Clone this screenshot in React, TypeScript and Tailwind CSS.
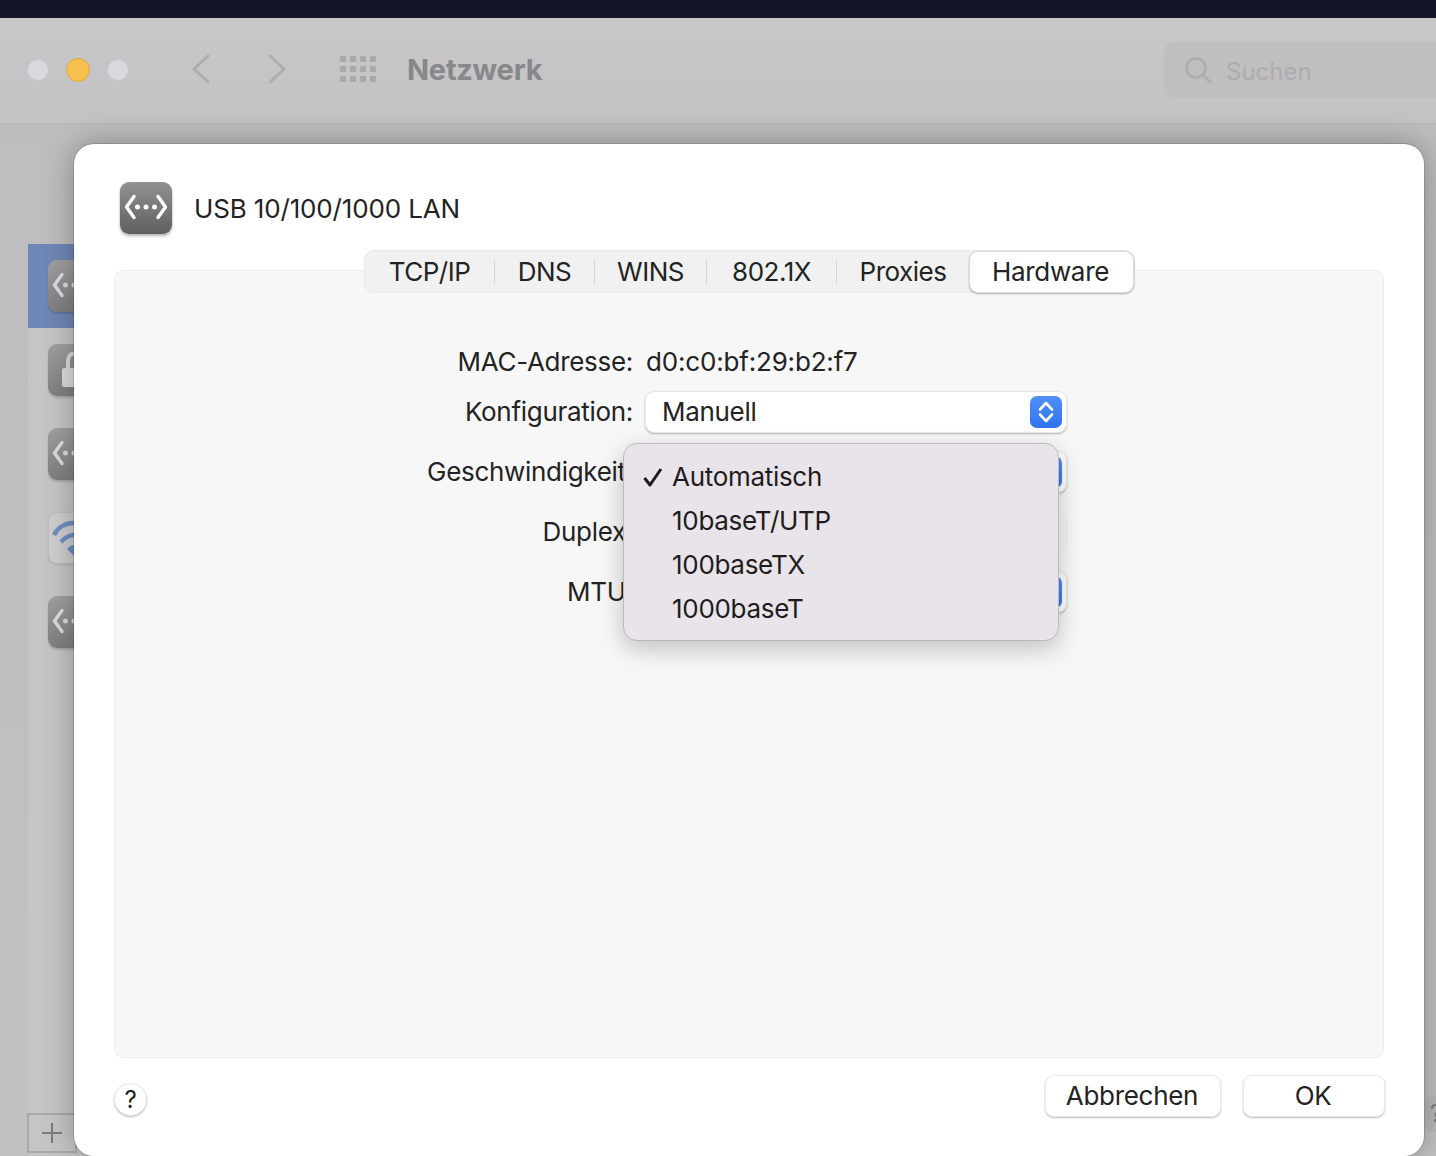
import React from "react";

function NetIcon({ dim = false }: { dim?: boolean }) {
  const c = dim ? "#dcdcdc" : "#fff";
  return (
    <div className={`w-[52px] h-[52px] rounded-[9px] flex items-center justify-center shrink-0 ${dim ? "bg-gradient-to-b from-[#a09fa1] to-[#7f7e80] shadow-[0_2px_2px_rgba(0,0,0,0.15)]" : "bg-gradient-to-b from-[#929292] to-[#5f5f5f] shadow-[0_2px_3px_rgba(0,0,0,0.3)]"}`}>
      <svg width="46" height="30" viewBox="0 0 46 30" fill="none">
        <path d="M11 3.5 L3.5 14 L11 24.5" stroke={c} strokeWidth="3.4" strokeLinecap="round" strokeLinejoin="round" />
        <path d="M35 3.5 L42.5 14 L35 24.5" stroke={c} strokeWidth="3.4" strokeLinecap="round" strokeLinejoin="round" />
        <circle cx="14.5" cy="14" r="2.5" fill={c} />
        <circle cx="23" cy="14" r="2.5" fill={c} />
        <circle cx="31.5" cy="14" r="2.5" fill={c} />
      </svg>
    </div>
  );
}

function LockIcon() {
  return (
    <div className="w-[52px] h-[52px] rounded-[9px] flex items-center justify-center shrink-0 bg-gradient-to-b from-[#a09fa1] to-[#7f7e80] shadow-[0_2px_2px_rgba(0,0,0,0.15)]">
      <svg width="32" height="38" viewBox="0 0 32 38" fill="none">
        <path d="M10 17 V10 C10 0 22 0 22 10 V17" stroke="#dcdcdc" strokeWidth="4" />
        <rect x="4" y="17" width="24" height="19" rx="2" fill="#dcdcdc" />
      </svg>
    </div>
  );
}

function WifiIcon() {
  return (
    <div className="w-[52px] h-[52px] rounded-[9px] flex items-center justify-center shrink-0 bg-[#cfcecf] border border-[#bdbcbe] shadow-[0_1px_2px_rgba(0,0,0,0.1)]">
      <svg width="44" height="36" viewBox="0 0 44 36" fill="none">
        <path d="M2 15 C10 -1 34 -1 42 15" stroke="#6f8fc2" strokeWidth="4.5" />
        <path d="M9 22 Q22 8 35 22" stroke="#6f8fc2" strokeWidth="4.5" />
        <path d="M15 29 Q22 21 29 29 L22 36 Z" fill="#6f8fc2" />
      </svg>
    </div>
  );
}

function SidebarRow({ children, selected = false }: { children: React.ReactNode; selected?: boolean }) {
  return <div className={`h-[84px] pl-5 flex items-center ${selected ? "bg-[#6f87b6]" : ""}`}>{children}</div>;
}

function Stepper() {
  return (
    <div className="w-8 h-8 rounded-[7px] bg-gradient-to-b from-[#4f90f7] to-[#2f73ee] flex items-center justify-center">
      <svg width="16" height="24" viewBox="0 0 16 24" fill="none">
        <path d="M2 9.5 L8 3 L14 9.5" stroke="#fff" strokeWidth="2.6" strokeLinecap="round" strokeLinejoin="round" />
        <path d="M2 14.5 L8 21 L14 14.5" stroke="#fff" strokeWidth="2.6" strokeLinecap="round" strokeLinejoin="round" />
      </svg>
    </div>
  );
}

function FormRow({ label, value, disabled = false }: { label: string; value?: string; disabled?: boolean }) {
  return (
    <div className="flex items-center h-[42px] mb-[18px]">
      <div className="w-[225px] pr-[12px] pb-[2px] text-right whitespace-nowrap">{label}</div>
      <div className={`w-[422px] h-[42px] rounded-[9px] flex items-center justify-between pl-4 pr-[4px] pb-[2px] ${disabled ? "border border-[#ebebeb] bg-[#f5f5f5]" : "bg-white border border-[#e7e7e7] shadow-[0_1px_2px_rgba(0,0,0,0.28)]"}`}>
        <span>{value}</span>
        {!disabled && <span className="pt-[2px]"><Stepper /></span>}
      </div>
    </div>
  );
}

function Tab({ label, width }: { label: string; width: string }) {
  return (
    <div className="flex items-center h-full">
      <span className={`${width} text-center pb-[1px] tracking-[-0.5px]`}>{label}</span>
      <span className="w-px h-[24px] bg-[#d6d6d6]" />
    </div>
  );
}

function MenuItem({ label, checked = false }: { label: string; checked?: boolean }) {
  return (
    <div className="h-[44px] flex items-center pl-[18px]">
      <span className="w-[30px] flex items-center">
        {checked && (
          <svg width="22" height="20" viewBox="0 0 22 20" fill="none">
            <path d="M2.5 11 L8 18 L19 2" stroke="#1f1c20" strokeWidth="3" strokeLinejoin="round" />
          </svg>
        )}
      </span>
      <span className="pb-[1px]">{label}</span>
    </div>
  );
}

function FooterButton({ label, width }: { label: string; width: string }) {
  return (
    <div className={`${width} h-[42px] pb-[2px] pr-[2px] rounded-[9px] bg-white border border-[#ebebeb] shadow-[0_1px_2px_rgba(0,0,0,0.28)] flex items-center justify-center text-[#232323]`}>
      {label}
    </div>
  );
}

export default function App() {
  return (
    <div className="relative w-[1436px] h-[1156px] overflow-hidden bg-[#121628] pt-[18px] font-['Inter','Liberation_Sans',sans-serif]">
      <div className="h-[1138px] rounded-tl-[10px] bg-[#bdbcbe] flex flex-col">
        <div className="h-[106px] shrink-0 flex items-center bg-gradient-to-b from-[#c8c6c9] to-[#c3c2c4] border-b border-[#b5b4b6] pl-[27px] pb-[1px]">
          <div className="flex items-center gap-[18px]">
            <span className="w-[22px] h-[22px] rounded-full bg-[#dcd9de] border border-[#c9c6ca]" />
            <span className="w-[24px] h-[24px] rounded-full bg-[#f6c04f] border border-[#e0a83a] -mx-[1px]" />
            <span className="w-[22px] h-[22px] rounded-full bg-[#dcd9de] border border-[#c9c6ca]" />
          </div>
          <svg className="ml-[62px] -mt-[2px]" width="20" height="30" viewBox="0 0 20 30" fill="none">
            <path d="M17 2 L3 15 L17 28" stroke="#aeadaf" strokeWidth="3" strokeLinecap="round" strokeLinejoin="round" />
          </svg>
          <svg className="ml-[56px] -mt-[2px]" width="20" height="30" viewBox="0 0 20 30" fill="none">
            <path d="M3 2 L17 15 L3 28" stroke="#aeadaf" strokeWidth="3" strokeLinecap="round" strokeLinejoin="round" />
          </svg>
          <div className="ml-[53px] -mt-[2px] grid grid-cols-4 gap-x-[4px] gap-y-[4px]">
            {Array.from({ length: 12 }).map((_, i) => (
              <span key={i} className="w-[6px] h-[6px] bg-[#a9a8aa] rounded-[1px]" />
            ))}
          </div>
          <div className="ml-[31px] text-[29px] tracking-[-0.25px] font-bold text-[#888789]">Netzwerk</div>
          <div className="ml-auto w-[272px] h-[56px] rounded-l-[10px] bg-[#c0bec1] flex items-center pl-[21px] gap-[14px] text-[24px] text-[#aeacaf]">
            <svg width="27" height="27" viewBox="0 0 27 27" fill="none">
              <circle cx="11" cy="11" r="9.5" stroke="#aeacaf" strokeWidth="2.5" />
              <path d="M18 18 L25 25" stroke="#aeacaf" strokeWidth="3" strokeLinecap="round" />
            </svg>
            <span className="pt-[4px]">Suchen</span>
          </div>
        </div>
        <div className="flex-1 pl-[28px] pt-[120px] bg-gradient-to-b from-[#bdbcbe] to-[#c1c0c2] flex">
          <div className="w-[120px] bg-[#c5c4c6] flex flex-col">
            <SidebarRow selected><NetIcon dim /></SidebarRow>
            <SidebarRow><LockIcon /></SidebarRow>
            <SidebarRow><NetIcon dim /></SidebarRow>
            <SidebarRow><WifiIcon /></SidebarRow>
            <SidebarRow><NetIcon dim /></SidebarRow>
            <div className="mt-auto mb-[3px] w-[50px] h-[40px] -ml-[1px] border-[2px] border-[#a9a8aa] flex items-center justify-center">
              <svg width="22" height="22" viewBox="0 0 22 22" fill="none">
                <path d="M11 1 V21 M1 11 H21" stroke="#7d7c7e" strokeWidth="2" />
              </svg>
            </div>
          </div>
        </div>
      </div>

      <div className="absolute right-[-18px] top-[1096px] w-[36px] h-[36px] rounded-full bg-[#b9b8ba] flex items-center justify-center text-[24px] text-[#7d7c7e]">?</div>

      <div className="absolute left-[74px] top-[144px] w-[1350px] h-[1012px] rounded-[20px] bg-white shadow-[0_0_0_1px_rgba(0,0,0,0.12),0_0_30px_rgba(0,0,0,0.3)] text-[26px] tracking-[-0.3px] text-[#232323] px-[40px] pt-[38px] flex flex-col">
        <div className="flex items-center h-[52px] pl-[6px] gap-[22px]">
          <NetIcon />
          <span className="pt-[1px] tracking-[-0.15px]">USB 10/100/1000 LAN</span>
        </div>
        <div className="relative mt-[36px] h-[788px] rounded-[9px] bg-[#f7f7f7] border border-[#ececec]">
          <div className="absolute left-[249px] top-[-21px] h-[43px] w-[771px] rounded-[10px] bg-[#f1f1f1] border border-[#e8e8e8] flex items-center">
            <Tab label="TCP/IP" width="w-[129px]" />
            <Tab label="DNS" width="w-[99px]" />
            <Tab label="WINS" width="w-[111px]" />
            <Tab label="802.1X" width="w-[129px]" />
            <span className="w-[133px] text-center pb-[1px] tracking-[-0.5px]">Proxies</span>
            <div className="ml-auto shrink-0 h-[42px] w-[165px] pb-[1px] pr-[2px] rounded-[9px] bg-white border border-[#dcdcdc] shadow-[0_1px_2px_rgba(0,0,0,0.3)] flex items-center justify-center">Hardware</div>
          </div>
          <div className="pl-[318px] pt-[69px]">
            <div className="flex items-center h-[42px] mb-[9px]">
              <div className="w-[212px] pr-[12px] text-right whitespace-nowrap">MAC-Adresse:</div>
              <div className="pl-[1px] tracking-[-0.18px]">d0:c0:bf:29:b2:f7</div>
            </div>
            <div className="-ml-[13px]">
              <FormRow label="Konfiguration:" value="Manuell" />
              <FormRow label="Geschwindigkeit:" />
              <FormRow label="Duplex:" disabled />
              <FormRow label="MTU:" />
            </div>
          </div>
          <div className="absolute left-[508px] top-[172px] w-[436px] h-[198px] rounded-[14px] bg-[#e8e4e9] border border-[#bdbabd] shadow-[0_8px_24px_rgba(0,0,0,0.22)] py-[11px] text-[#1f1c20]">
            <MenuItem label="Automatisch" checked />
            <MenuItem label="10baseT/UTP" />
            <MenuItem label="100baseTX" />
            <MenuItem label="1000baseT" />
          </div>
        </div>
        <div className="flex items-start justify-between mt-[17px] -mr-[1px]">
          <div className="mt-[8px] w-[33px] h-[33px] rounded-full bg-white border border-[#ebebeb] shadow-[0_1px_2px_rgba(0,0,0,0.28)] flex items-center justify-center text-[24px]">?</div>
          <div className="flex gap-[22px]">
            <FooterButton label="Abbrechen" width="w-[176px]" />
            <FooterButton label="OK" width="w-[142px]" />
          </div>
        </div>
      </div>
    </div>
  );
}
